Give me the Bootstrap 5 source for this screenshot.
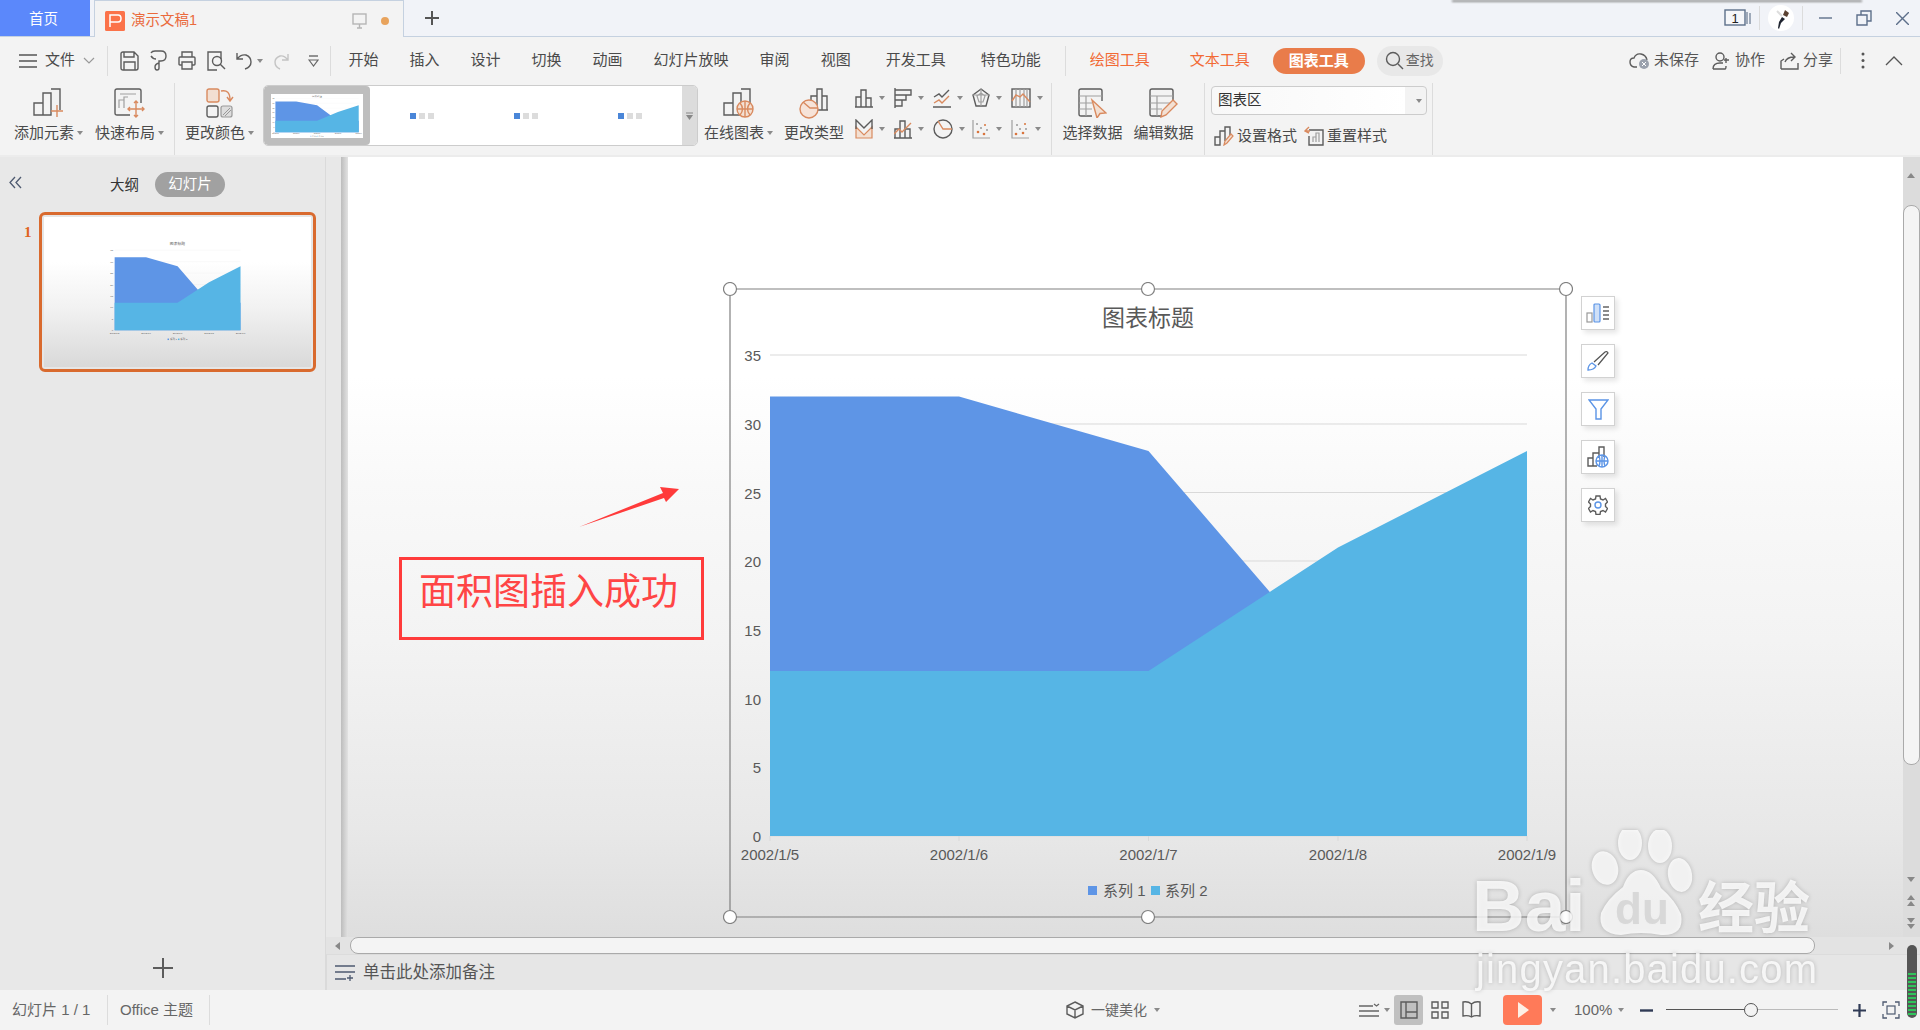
<!DOCTYPE html>
<html lang="zh-CN">
<head>
<meta charset="UTF-8">
<title>演示文稿1</title>
<link href="https://cdn.jsdelivr.net/npm/bootstrap@5.3.3/dist/css/bootstrap.min.css" rel="stylesheet">
<style>
body { font-family: "Liberation Sans", "Noto Sans CJK SC", sans-serif; font-size: 15px; color: #4a4a4a; background: #f3f3f3; overflow: hidden; }
svg { display: block; flex: none; }
.app { height: 1030px; width: 1920px; position: relative; }
.i { fill: none; stroke: #5c5c5c; stroke-width: 1.4; }
.o { fill: none; stroke: #d98a5f; stroke-width: 1.4; }
.g { fill: none; stroke: #a0a0a0; stroke-width: 1.2; }
.b { fill: none; stroke: #5b94e6; stroke-width: 1.4; }
.caret { display: inline-block; flex: none; width: 0; height: 0; border-left: 3px solid transparent; border-right: 3px solid transparent; border-top: 4px solid #8a8a8a; }
.vsep { flex: none; width: 1px; background: #dcdcdc; }

/* title bar */
.titlebar { height: 37px; background: #f1f3f8; border-bottom: 1px solid #c5d1e0; position: relative; }
.tab-home { width: 90px; height: 36px; background: #5b88fb; color: #fff; font-size: 14.5px; padding: 3px 3px 0 0; }
.tab-doc { margin-left: 4px; width: 310px; height: 37px; background: #f3f3f3; border: 1px solid #c5d1e0; border-bottom: 0; color: #ea6a3c; font-size: 14.5px; padding: 3px 0 0 10px; }
.tab-doc .name { margin-left: 6px; width: 221px; }
.tab-doc .dot { width: 8px; height: 8px; border-radius: 50%; background: #e8a35c; margin-left: 14px; }
.tab-add { margin-left: 20px; }
.top-shadow { position: absolute; left: 1452px; top: 0; width: 410px; height: 2px; background: #8d8d8d; filter: blur(1px); }
.win-ctl { margin-left: auto; padding-right: 11px; }
.win-ctl .vsep { height: 24px; }
.win-no { font-size: 13px; fill: #222; }

/* menu row */
.menubar { height: 43px; padding: 4px 0 0 19px; }
.menubar .vsep { height: 30px; }
.qa { gap: 10.5px; margin: 0 11px 0 12px; }
.qa .caret { margin-left: -10px; }
.menu { gap: 31px; margin-left: 18px; }
.menu .nav-link { padding: 0; color: #4a4a4a; font-size: 15px; }
.menu .more { margin-left: 4px; }
.tools { margin-left: 24px; }
.tools .tool { color: #f26a35; font-size: 15px; width: 61px; }
.tools .tool + .tool { margin-left: 39px; }
.tools .badge { margin-left: 22px; width: 92px; height: 26px; background: #e97c4a; font-size: 15px; font-weight: 700; padding: 0; line-height: 26px; border-radius: 13px; }
.find { margin-left: 12px; width: 66px; height: 30px; background: #e8e8e8; border-radius: 15px; padding-left: 8px; font-size: 14px; color: #666; gap: 2px; }
.saveinfo { margin-left: auto; padding-right: 17px; font-size: 15px; color: #555; }
.saveinfo .vsep { height: 26px; margin: 0 20px 0 7px; }
.saveinfo .gp { margin-left: 13px; }
.saveinfo .gp2 { margin-left: 15px; }
.saveinfo .up { margin-left: 20px; }

/* ribbon */
.ribbon { height: 77px; padding-left: 8px; border-bottom: 2px solid #ececec; }
.ribbon > .vsep { height: 72px; margin-top: 3px; }
.rb { flex: none; width: 81px; padding-top: 8px; }
.rb .ic { height: 35px; }
.rb .lb { font-size: 15px; line-height: 20px; white-space: nowrap; gap: 3px; }
.rb-type { width: 70px; }
.rb-edit { width: 61px; }
.gallery { flex: none; width: 435px; height: 61px; margin: 5px 0 0 3px; background: #fff; border: 1px solid #ccc; border-radius: 5px; overflow: hidden; }
.gallery .sel { width: 106px; background: #bebebe; padding: 0 7px; border-radius: 4px; }
.gallery .item { width: 106px; gap: 3px; }
.gallery .item i { display: block; width: 6px; height: 6px; background: #dcdcdc; }
.gallery .item i:first-child { background: #4a86d8; }
.gallery .more { margin-left: auto; width: 15px; background: #dcdcdc; }
.charts { flex: none; width: 195px; margin: 0 5px 0 2px; padding-top: 8px; row-gap: 11px; }
.charts .c { width: 39px; height: 20px; padding-left: 4px; gap: 6px; }
.panel { flex: none; width: 216px; margin: 6px 5px 0 6px; }
.combo { height: 29px; border: 1px solid #ccc; border-radius: 4px; padding: 0 4px 0 6px; background: linear-gradient(90deg, #f8f8f8, #fff 90%, #f3f3f3 90%); font-size: 14.5px; color: #333; }
.panel .fmt { margin-top: 10px; padding-left: 3px; font-size: 15px; gap: 3px; }
.rb-sep { margin-left: 10px; }

/* left panel */
.side { width: 326px; background: #e8e8e8; border-right: 1px solid #dadada; position: relative; }
.side-tabs { height: 55px; padding: 15px 0 0 9px; }
.side-tabs .t-outline { margin-left: 88px; font-size: 14.5px; color: #333; line-height: 27px; }
.side-tabs .badge { margin-left: 16px; width: 70px; height: 25px; background: #a1a1a1; font-size: 14.5px; font-weight: 400; line-height: 25px; padding: 0; border-radius: 13px; }
.side-row { padding-left: 24px; }
.side-no { width: 15px; color: #e0651f; font-weight: 700; font-family: "Liberation Serif", serif; font-size: 15px; padding-top: 9px; }
.thumb { width: 277px; height: 160px; border: 3px solid #d96a2e; border-radius: 6px; padding: 2px; background: #e6e6e6; }
.thumb .page { height: 100%; padding-top: 22px; background: linear-gradient(#fff, #fff 30%, #f2f2f2 60%, #d9d9d9 100%); }
.side-add { margin-top: auto; height: 40px; margin-bottom: 2px; }

/* stage */
.gutter { width: 22px; background: linear-gradient(90deg, #e8e8e8 68%, #bfbfbf 70%, #e2e2e2); }
.stage { position: relative; overflow: hidden; background: linear-gradient(#fff, #fff 28%, #f9f9f9 42%, #f3f3f3 62%, #e8e8e8 86%, #dedede); }
.chart-box { position: absolute; left: 375px; top: 125px; }
.note-box { position: absolute; left: 51px; top: 400px; width: 305px; height: 83px; border: 3px solid #ff3b3b; color: #ff4545; font-size: 37px; line-height: 1; padding: 14px 0 0 17px; white-space: nowrap; }
.arrow { position: absolute; left: 225px; top: 325px; }
.float-tools { position: absolute; left: 1233px; top: 139px; gap: 14px; }
.float-tools div { width: 34px; height: 34px; background: #fff; border: 1px solid #d2d2d2; box-shadow: 3px 3px 5px rgba(0,0,0,.1); }
.vscroll { width: 17px; background: #dcdcdc; position: relative; }
.vscroll .thumbv { position: absolute; left: 0; right: 0; top: 48px; height: 560px; background: #f4f4f4; border: 1px solid #aaa; border-radius: 8px; }
.arr-u, .arr-d { position: absolute; left: 4px; width: 0; height: 0; border-left: 4px solid transparent; border-right: 4px solid transparent; }
.arr-u { border-bottom: 5px solid #888; }
.arr-d { border-top: 5px solid #888; }
.a1 { top: 16px; } .a2 { top: 720px; } .a3 { top: 738px; } .a4 { top: 744px; } .a5 { top: 761px; } .a6 { top: 767px; }
.hscroll { height: 17px; background: #e3e3e3; padding: 0 26px 0 9px; }
.hscroll .track { width: 1465px; height: 17px; margin: 0 auto 0 10px; background: #f4f4f4; border: 1px solid #aaa; border-radius: 8px; }
.arr-l, .arr-r { width: 0; height: 0; border-top: 4px solid transparent; border-bottom: 4px solid transparent; }
.arr-l { border-right: 5px solid #888; }
.arr-r { border-left: 5px solid #888; }
.notes { height: 36px; background: #e6e6e6; padding-left: 8px; font-size: 16.5px; color: #555; gap: 8px; border-top: 1px solid #dcdcdc; border-left: 1px solid #dadada; }

/* status bar */
.statusbar { height: 40px; background: #f3f3f3; font-size: 15px; color: #666; }
.statusbar .vsep { height: 30px; }
.statusbar .pages { width: 107px; padding-left: 12px; }
.statusbar .theme { width: 101px; padding-left: 12px; }
.beautify { margin-left: 856px; width: 293px; gap: 7px; font-size: 14px; }
.viewbtn { width: 29px; height: 30px; background: #c0c0c0; border-radius: 3px; margin-left: 4px; }
.bookview { margin-left: 13px; }
.playbtn { width: 39px; height: 30px; background: #ff7a59; border-radius: 4px; margin-left: 22px; }
.zoom-pct { margin-left: 18px; width: 44px; }
.slider-w { width: 172px; height: 14px; margin: 0 15px 0 13px; position: relative; }
.slider-w .line { position: absolute; top: 6px; left: 0; right: 0; height: 1px; background: #bbb; }
.slider-w .line-on { position: absolute; top: 6px; left: 0; width: 85px; height: 1px; background: #555; }
.slider-w .knob { position: absolute; top: 0; left: 78px; width: 14px; height: 14px; border: 1.5px solid #555; border-radius: 50%; background: #f3f3f3; }
.meter { position: absolute; left: 1907px; top: 945px; width: 10px; height: 73px; background: #555; border-radius: 5px; overflow: hidden; }
.meter div { position: absolute; left: 1px; right: 1px; top: 28px; bottom: 3px; background: repeating-linear-gradient(#2fc45a 0 2px, #555 2px 4px); }
.watermark { position: absolute; left: 1470px; top: 830px; pointer-events: none; filter: drop-shadow(0 0 2px rgba(0,0,0,.25)); }
.watermark text { font-family: "Liberation Sans", "Noto Sans CJK SC", sans-serif; }
</style>
</head>
<body>
<!-- shared icon and chart definitions -->
<svg class="d-none">
  <defs>
    <symbol id="bars" viewBox="0 0 28 28"><path class="i" d="M1 15h9v12H1zM10 5h8v22h-8zM18 1h9v21"/></symbol>
    <g id="chart">
      <path d="M770 355H1527M770 424H1527M770 492.500H1527M770 561H1527M770 630H1527M770 699H1527M770 767.500H1527M770 836H1527" stroke="#d9d9d9" stroke-width="1" fill="none"/>
      <path d="M770 836V841M959 836V841M1148.500 836V841M1338 836V841M1527 836V841" stroke="#d9d9d9"/>
      <path d="M770 396.500H959L1148.500 451L1338 671H1527V836H770Z" fill="#5e95e6"/>
      <path d="M770 671H1148.500L1338 547.500L1527 451V836H770Z" fill="#56b5e5"/>
      <g font-family="'Liberation Sans','Noto Sans CJK SC',sans-serif" font-size="15" fill="#595959">
        <text x="1148" y="326" font-size="23" text-anchor="middle">图表标题</text>
        <g text-anchor="end">
          <text x="761" y="361">35</text><text x="761" y="430">30</text><text x="761" y="499">25</text><text x="761" y="567">20</text><text x="761" y="636">15</text><text x="761" y="705">10</text><text x="761" y="773">5</text><text x="761" y="842">0</text>
        </g>
        <g text-anchor="middle">
          <text x="770" y="860">2002/1/5</text><text x="959" y="860">2002/1/6</text><text x="1148.500" y="860">2002/1/7</text><text x="1338" y="860">2002/1/8</text><text x="1527" y="860">2002/1/9</text>
        </g>
        <rect x="1088" y="886" width="9" height="9" fill="#5e95e6"/><text x="1103" y="896">系列 1</text>
        <rect x="1151" y="886" width="9" height="9" fill="#56b5e5"/><text x="1165" y="896">系列 2</text>
      </g>
    </g>
  </defs>
</svg>

<div class="app d-flex flex-column">
  <!-- title bar -->
  <div class="titlebar d-flex">
    <div class="tab-home d-flex align-items-center justify-content-center">首页</div>
    <div class="tab-doc d-flex align-items-center">
      <svg width="20" height="20" viewBox="0 0 20 20"><rect width="20" height="20" rx="1.500" fill="#fb7249"/><path d="M5 16V4h8q3 0 3 3.500T13 11H5" fill="none" stroke="#fff" stroke-width="1.500"/></svg>
      <span class="name">演示文稿1</span>
      <svg width="15" height="16" viewBox="0 0 15 16"><rect x="1" y="1" width="13" height="10" fill="#f3f3f3" stroke="#b5b5b5" stroke-width="1.400"/><path d="M7.500 11v4M5 15h5" stroke="#b5b5b5" stroke-width="1.400"/></svg>
      <span class="dot"></span>
    </div>
    <svg class="tab-add align-self-center" width="16" height="16" viewBox="0 0 16 16"><path d="M8 1v14M1 8h14" stroke="#555" stroke-width="2"/></svg>
    <div class="top-shadow"></div>
    <div class="win-ctl d-flex align-items-center">
      <svg width="27" height="18" viewBox="0 0 27 18"><rect x="1" y="1" width="20" height="15" fill="#f6f7fa" stroke="#5d6f8a" stroke-width="1.400"/><text class="win-no" x="11" y="13.500" text-anchor="middle">1</text><path d="M23 3v12M26 4v11" stroke="#7d8ba0" stroke-width="1.400"/></svg>
      <span class="vsep ms-2"></span>
      <svg class="mx-2" width="26" height="26" viewBox="0 0 26 26"><circle cx="13" cy="13" r="13" fill="#fff"/><path d="M17 5l4 3-2 4-4-2z" fill="#5a4132"/><path d="M14 12l3 2-4 4-2 6-1-1 1-6z" fill="#1f2430"/><path d="M9 6l5 5" stroke="#ddd" stroke-width="2"/></svg>
      <span class="vsep me-3"></span>
      <svg width="13" height="2" viewBox="0 0 13 2"><path d="M0 1h13" stroke="#5d6f8a" stroke-width="1.400"/></svg>
      <svg class="ms-4" width="16" height="16" viewBox="0 0 16 16"><path d="M1 5h10v10H1zM5 5V1h10v10h-4" fill="none" stroke="#5d6f8a" stroke-width="1.400"/></svg>
      <svg class="ms-4" width="13" height="13" viewBox="0 0 13 13"><path d="M0 0l13 13M13 0L0 13" stroke="#5d6f8a" stroke-width="1.400"/></svg>
    </div>
  </div>

  <!-- menu row -->
  <div class="menubar d-flex align-items-center">
    <svg width="18" height="14" viewBox="0 0 18 14"><path d="M0 1h18M0 7h18M0 13h18" stroke="#555" stroke-width="1.400"/></svg>
    <span class="ms-2">文件</span>
    <svg class="mx-2" width="12" height="7" viewBox="0 0 12 7"><path d="M1 1l5 5 5-5" fill="none" stroke="#999" stroke-width="1.200"/></svg>
    <span class="vsep ms-1"></span>
    <div class="qa d-flex align-items-center">
      <svg width="19" height="20" viewBox="0 0 19 20"><path class="i" d="M1 3q0-2 2-2h11l4 4v12q0 2-2 2H3q-2 0-2-2zM4 1v5h10V1M4 19v-8h11v8"/></svg>
      <svg width="18" height="21" viewBox="0 0 18 21"><path class="i" d="M1 3q1-2 4-2h6q5 0 5 5t-5 5H9v7q0 2-2 2t-2-3 4-4M1 6q2 3 5 3"/></svg>
      <svg width="18" height="19" viewBox="0 0 18 19"><path class="i" d="M4 6V1h10v5M4 14H2q-1 0-1-1V7q0-1 1-1h14q1 0 1 1v6q0 1-1 1h-2M4 11h10v7H4z"/></svg>
      <svg width="19" height="20" viewBox="0 0 19 20"><path class="i" d="M14 8V1H1v18h9"/><circle class="i" cx="10" cy="10" r="4.500"/><path class="i" d="M13 13l5 5"/></svg>
      <svg width="20" height="19" viewBox="0 0 20 19"><path class="i" d="M1 2v6h6M1 8q4-5 9-4 5 2 5 7 0 5-6 7"/></svg>
      <span class="caret"></span>
      <svg width="16" height="18" viewBox="0 0 16 18"><path d="M15 2v6H9M15 8q-4-5-8-4-5 2-5 6 0 5 5 7" fill="none" stroke="#c4c4c4" stroke-width="1.400"/></svg>
      <svg class="ms-2" width="11" height="12" viewBox="0 0 11 12"><path d="M1 1h9" stroke="#666" stroke-width="1.400"/><path d="M1 5l4.500 6L10 5z" fill="none" stroke="#666" stroke-width="1.200"/></svg>
    </div>
    <span class="vsep"></span>
    <nav class="nav menu flex-nowrap">
      <a class="nav-link">开始</a><a class="nav-link">插入</a><a class="nav-link">设计</a><a class="nav-link">切换</a><a class="nav-link">动画</a><a class="nav-link">幻灯片放映</a><a class="nav-link">审阅</a><a class="nav-link">视图</a><a class="nav-link more">开发工具</a><a class="nav-link more">特色功能</a>
    </nav>
    <span class="vsep ms-4"></span>
    <div class="tools d-flex align-items-center">
      <span class="tool text-nowrap">绘图工具</span><span class="tool text-nowrap">文本工具</span>
      <span class="badge text-white">图表工具</span>
    </div>
    <div class="find d-flex align-items-center">
      <svg width="19" height="19" viewBox="0 0 19 19"><circle class="i" cx="8" cy="8" r="6.500"/><path class="i" d="M13 13l5 5"/></svg>
      <span class="text-nowrap">查找</span>
    </div>
    <div class="saveinfo d-flex align-items-center">
      <svg width="21" height="18" viewBox="0 0 21 18"><path class="i" d="M8 15H5q-4-1-4-5t4-4q2-5 7-4 5 1 6 6"/><circle cx="15" cy="12" r="5" fill="#9aa1ad"/><path d="M13 10l4 4M17 10l-4 4" stroke="#fff"/></svg>
      <span class="ms-1 text-nowrap">未保存</span>
      <svg class="gp" width="19" height="18" viewBox="0 0 19 18"><circle class="i" cx="8" cy="5" r="4"/><path class="i" d="M1 17q0-6 7-6h3M1 17h12q1 0 1-3M14 6v5M12 8h5"/></svg>
      <span class="ms-1 text-nowrap">协作</span>
      <svg class="gp2" width="19" height="18" viewBox="0 0 19 18"><path class="i" d="M1 17V9l3-2M18 11v6H1M5 10q2-5 9-5M11 1l4 4-4 4"/></svg>
      <span class="ms-1 text-nowrap">分享</span>
      <span class="vsep"></span>
      <svg width="4" height="17" viewBox="0 0 4 17"><circle cx="2" cy="2" r="1.500" fill="#555"/><circle cx="2" cy="8.500" r="1.500" fill="#555"/><circle cx="2" cy="15" r="1.500" fill="#555"/></svg>
      <svg class="up" width="18" height="10" viewBox="0 0 18 10"><path d="M1 9l8-8 8 8" fill="none" stroke="#555" stroke-width="1.300"/></svg>
    </div>
  </div>

  <!-- ribbon -->
  <div class="ribbon d-flex">
    <div class="rb d-flex flex-column align-items-center">
      <div class="ic"><svg width="32" height="30" viewBox="0 0 32 30"><use href="#bars" width="28" height="28"/><path class="o" d="M24 17v12M18 23h12"/></svg></div>
      <div class="lb d-flex align-items-center">添加元素<span class="caret"></span></div>
    </div>
    <div class="rb d-flex flex-column align-items-center">
      <div class="ic"><svg width="32" height="30" viewBox="0 0 32 30"><path class="i" d="M16 27H3q-2 0-2-2V3q0-2 2-2h22q2 0 2 2v12"/><path class="g" d="M6 6h16M5 20v-8h5v8M10 20V9h4"/><path class="o" d="M22 13v16M14 21h16M20 15l2-2 2 2M20 27l2 2 2-2M16 19l-2 2 2 2M28 19l2 2-2 2"/></svg></div>
      <div class="lb d-flex align-items-center">快速布局<span class="caret"></span></div>
    </div>
    <span class="vsep ms-1"></span>
    <div class="rb ms-1 d-flex flex-column align-items-center">
      <div class="ic"><svg width="28" height="30" viewBox="0 0 28 30"><rect x="1" y="1" width="12" height="13" rx="2" fill="#f2dfd2" stroke="#d98a5f" stroke-width="1.400"/><path class="o" d="M15 3q9-2 9 9M21 9l3 4 3-4"/><rect class="i" x="1" y="18" width="11" height="11" rx="2"/><rect x="15" y="18" width="11" height="11" rx="2" fill="#ddd" stroke="#999" stroke-width="1.200"/><path d="M17 27l7-7M19 28l6-6" stroke="#999"/></svg></div>
      <div class="lb d-flex align-items-center">更改颜色<span class="caret"></span></div>
    </div>
    <div class="gallery d-flex">
      <div class="sel d-flex align-items-center">
        <svg width="92" height="44" viewBox="730 289 836 628" preserveAspectRatio="none"><rect x="730" y="289" width="836" height="628" fill="#fff"/><use href="#chart"/></svg>
      </div>
      <div class="item d-flex align-items-center justify-content-center"><i></i><i></i><i></i></div>
      <div class="item d-flex align-items-center justify-content-center"><i></i><i></i><i></i></div>
      <div class="item d-flex align-items-center justify-content-center"><i></i><i></i><i></i></div>
      <div class="more d-flex align-items-center justify-content-center">
        <svg width="7" height="8" viewBox="0 0 7 8"><path d="M0 1h7" stroke="#888"/><path d="M0 3h7L3.500 8z" fill="#888"/></svg>
      </div>
    </div>
    <div class="rb d-flex flex-column align-items-center">
      <div class="ic"><svg width="32" height="30" viewBox="0 0 32 30"><use href="#bars" width="28" height="28"/><circle cx="22" cy="21" r="8" fill="#f3e0d3" stroke="#d98a5f" stroke-width="1.400"/><path class="o" d="M14 21h16M22 13v16M17 15q5 6 0 12M27 15q-5 6 0 12" stroke-width="1"/></svg></div>
      <div class="lb d-flex align-items-center">在线图表<span class="caret"></span></div>
    </div>
    <div class="rb rb-type d-flex flex-column align-items-center">
      <div class="ic"><svg width="30" height="31" viewBox="0 0 30 31"><path class="i" d="M12 20V8h6v14M18 22V1h5v21M23 22V8h5v14M12 22h17"/><circle cx="10" cy="21" r="9" fill="#f6e3d8" stroke="#d98a5f" stroke-width="1.400"/><path class="o" d="M4 14l7 6h8"/></svg></div>
      <div class="lb d-flex align-items-center">更改类型</div>
    </div>
    <div class="charts d-flex flex-wrap align-content-start">
      <div class="c d-flex align-items-center"><svg width="18" height="20" viewBox="0 0 18 20"><path class="i" d="M1 19V9h5v10M6 19V2h5v17M11 19v-9h5v9M0 19h18" stroke-width="1.200"/></svg><span class="caret"></span></div>
      <div class="c d-flex align-items-center"><svg width="18" height="20" viewBox="0 0 18 20"><path class="i" d="M1 0v20M1 2h16v5H1M1 7h11v5H1M1 12h7v6H1" stroke-width="1.200"/></svg><span class="caret"></span></div>
      <div class="c d-flex align-items-center"><svg width="18" height="20" viewBox="0 0 18 20"><path class="i" d="M1 9l5-3 3 3 7-7M0 19h18" stroke-width="1.200"/><path class="o" d="M1 15l5-3 3 3 7-7"/></svg><span class="caret"></span></div>
      <div class="c d-flex align-items-center"><svg width="18" height="20" viewBox="0 0 18 20"><path class="i" d="M9 1l8 6-3 11H4L1 7z" stroke-width="1.100"/><path class="g" d="M9 5l4 3-2 6H7L5 8zM9 1v17M1 7l16 0"/></svg><span class="caret"></span></div>
      <div class="c d-flex align-items-center"><svg width="20" height="20" viewBox="0 0 20 20"><rect class="i" x="1" y="1" width="18" height="18"/><path class="g" d="M5 1v18M9 1v18M13 1v18M16 1v18"/><path class="o" d="M1 13l4-6 4 2 3-3 7 8"/></svg><span class="caret"></span></div>
      <div class="c d-flex align-items-center"><svg width="18" height="20" viewBox="0 0 18 20"><path d="M1 8l8 8 8-8v11H1z" fill="#f3e0d3" stroke="#d98a5f" stroke-width="1.200"/><path class="i" d="M1 10V1l8 8 8-8v9" stroke-width="1.200"/></svg><span class="caret"></span></div>
      <div class="c d-flex align-items-center"><svg width="18" height="20" viewBox="0 0 18 20"><path class="i" d="M1 19v-9h5v9M6 19V2h5v17M11 19v-9h5v9M0 19h18" stroke-width="1.200"/><path class="o" d="M0 15l5-5 3 3 9-9"/></svg><span class="caret"></span></div>
      <div class="c d-flex align-items-center"><svg width="20" height="20" viewBox="0 0 20 20"><circle class="i" cx="10" cy="10" r="9"/><path class="o" d="M5 2l5 8h9"/></svg><span class="caret"></span></div>
      <div class="c d-flex align-items-center"><svg width="18" height="20" viewBox="0 0 18 20"><path class="g" d="M1 1v18h17"/><g fill="#d9743d"><circle cx="6" cy="13" r="1.300"/><circle cx="12" cy="15" r="1.300"/><circle cx="13" cy="6" r="1"/></g><g fill="#999"><circle cx="5" cy="5" r="1"/><circle cx="9" cy="9" r="1"/><circle cx="15" cy="11" r="1"/></g></svg><span class="caret"></span></div>
      <div class="c d-flex align-items-center"><svg width="18" height="20" viewBox="0 0 18 20"><path class="g" d="M1 1v18h17"/><g fill="#d9743d"><circle cx="5" cy="15" r="1.300"/><circle cx="12" cy="14" r="1.300"/><circle cx="14" cy="5" r="1"/></g><g fill="#999"><circle cx="6" cy="6" r="1"/><circle cx="9" cy="10" r="1"/><circle cx="15" cy="10" r="1"/></g></svg><span class="caret"></span></div>
    </div>
    <span class="vsep"></span>
    <div class="rb d-flex flex-column align-items-center">
      <div class="ic"><svg width="29" height="30" viewBox="0 0 29 30"><path class="i" d="M14 28H3q-2 0-2-2V3q0-2 2-2h19q2 0 2 2v10"/><path class="g" d="M1 8h23M1 15h13M1 21h13M8 8v20"/><path d="M14 12l14 13-6 .5-3 4.500z" fill="#f3e0d3" stroke="#d98a5f" stroke-width="1.400"/></svg></div>
      <div class="lb d-flex align-items-center">选择数据</div>
    </div>
    <div class="rb rb-edit d-flex flex-column align-items-center">
      <div class="ic"><svg width="29" height="30" viewBox="0 0 29 30"><path class="i" d="M12 28H3q-2 0-2-2V3q0-2 2-2h19q2 0 2 2v13"/><path class="g" d="M1 8h23M1 15h23M1 21h12M8 8v20"/><path d="M12 29l1-6L24 12l4 4-11 11z" fill="#f3e0d3" stroke="#d98a5f" stroke-width="1.400"/></svg></div>
      <div class="lb d-flex align-items-center">编辑数据</div>
    </div>
    <span class="vsep rb-sep"></span>
    <div class="panel">
      <div class="combo d-flex align-items-center justify-content-between">图表区<span class="caret"></span></div>
      <div class="fmt d-flex align-items-center">
        <svg width="20" height="20" viewBox="0 0 20 20"><path class="i" d="M1 11h5v8H1zM6 19V5h5v10M11 8V1h5v8" stroke-width="1.200"/><path d="M10 19l1-4 6-7 2 2-6 7z" fill="#f3e0d3" stroke="#d98a5f" stroke-width="1.200"/></svg>
        <span class="text-nowrap">设置格式</span>
        <svg class="ms-1" width="20" height="20" viewBox="0 0 20 20"><path class="i" d="M5 4h14v15H5V10" stroke-width="1.200"/><path class="g" d="M9 16v-5h3v5M12 16V7h3v9"/><path class="o" d="M5 1L1 5l4 2M1 5h5"/></svg>
        <span class="text-nowrap">重置样式</span>
      </div>
    </div>
    <span class="vsep"></span>
  </div>

  <!-- workspace -->
  <div class="d-flex flex-grow-1 overflow-hidden">
    <div class="side d-flex flex-column">
      <div class="side-tabs d-flex">
        <svg class="mt-1" width="13" height="13" viewBox="0 0 13 13"><path d="M6 1L1 6.500 6 12M12 1L7 6.500 12 12" fill="none" stroke="#4e5a70" stroke-width="1.300"/></svg>
        <span class="t-outline">大纲</span>
        <span class="badge">幻灯片</span>
      </div>
      <div class="side-row d-flex">
        <span class="side-no">1</span>
        <div class="thumb">
          <div class="page d-flex justify-content-center">
            <svg width="139" height="105" viewBox="730 289 836 628"><use href="#chart"/></svg>
          </div>
        </div>
      </div>
      <div class="side-add d-flex justify-content-center align-items-center">
        <svg width="20" height="20" viewBox="0 0 20 20"><path d="M10 0v20M0 10h20" stroke="#5c5c5c" stroke-width="2"/></svg>
      </div>
    </div>

    <div class="d-flex flex-column flex-grow-1">
      <div class="d-flex flex-grow-1">
        <div class="gutter"></div>
        <div class="stage flex-grow-1">
          <svg class="arrow" width="110" height="50" viewBox="0 0 110 50"><path d="M6 45L90 11 87 5 106 7 93 20 91 16z" fill="#ff3b3b"/></svg>
          <div class="note-box">面积图插入成功</div>
          <svg class="chart-box" width="850" height="642" viewBox="723 282 850 642">
            <use href="#chart"/>
            <path d="M730 289H1566V917H730Z" fill="none" stroke="#808080" stroke-width="1.200"/>
            <g fill="#fff" stroke="#808080" stroke-width="1.200">
              <circle cx="730" cy="289" r="6.500"/><circle cx="1148" cy="289" r="6.500"/><circle cx="1566" cy="289" r="6.500"/><circle cx="730" cy="917" r="6.500"/><circle cx="1148" cy="917" r="6.500"/><circle cx="1566" cy="917" r="6.500"/>
            </g>
          </svg>
          <div class="float-tools d-flex flex-column">
            <div class="d-flex align-items-center justify-content-center"><svg width="24" height="20" viewBox="0 0 24 20"><rect x="1" y="10" width="5" height="9" fill="none" stroke="#999" stroke-width="1.200"/><rect x="8" y="1" width="6" height="18" rx="1" fill="#cfe0f8" stroke="#5b94e6" stroke-width="1.200"/><path d="M17 4h6M17 8h6M17 12h6M17 16h6" stroke="#666" stroke-width="1.400"/></svg></div>
            <div class="d-flex align-items-center justify-content-center"><svg width="22" height="20" viewBox="0 0 22 20"><path d="M1 19q0-5 4-7l4 3q-2 4-8 4z" fill="none" stroke="#5b94e6" stroke-width="1.300"/><path d="M7 11L18 1q2-1 3 1L11 14" fill="none" stroke="#555" stroke-width="1.300"/></svg></div>
            <div class="d-flex align-items-center justify-content-center"><svg width="21" height="21" viewBox="0 0 21 21"><path class="b" d="M1 1h19l-7 9v10h-5V10z"/></svg></div>
            <div class="d-flex align-items-center justify-content-center"><svg width="22" height="22" viewBox="0 0 22 22"><path class="i" d="M1 12h5v8H1zM6 20V7h6v5M12 7V1h5v10M1 20h9"/><circle class="b" cx="15" cy="15" r="6"/><path class="b" d="M9 15h12M15 9v12M12 10q2 5 0 10M18 10q-2 5 0 10" stroke-width="1"/></svg></div>
            <div class="d-flex align-items-center justify-content-center"><svg width="20" height="20" viewBox="0 0 20 20"><path class="i" d="M8 1h4l.5 3 2.500 1 2.500-1.500 2 3.500-2 2v2.500l2 2-2 3.500-2.500-1.500-2.500 1-.5 3H8l-.5-3-2.500-1-2.500 1.500-2-3.500 2-2V9l-2-2 2-3.500L5 5l2.500-1z" stroke-width="1.100"/><circle class="b" cx="10" cy="10" r="3"/></svg></div>
          </div>
        </div>
        <div class="vscroll">
          <span class="arr-u a1"></span>
          <div class="thumbv"></div>
          <span class="arr-d a2"></span>
          <span class="arr-u a3"></span><span class="arr-u a4"></span>
          <span class="arr-d a5"></span><span class="arr-d a6"></span>
        </div>
      </div>
      <div class="hscroll d-flex align-items-center">
        <span class="arr-l"></span>
        <div class="track"></div>
        <span class="arr-r"></span>
      </div>
      <div class="notes d-flex align-items-center">
        <svg width="20" height="16" viewBox="0 0 20 16"><path d="M0 1h20M0 7h20M0 14h11M15 10v6M12 13h6" stroke="#4e5a70" stroke-width="1.300"/></svg>
        <span class="text-nowrap">单击此处添加备注</span>
      </div>
    </div>
  </div>

  <!-- status bar -->
  <div class="statusbar d-flex align-items-center">
    <span class="pages text-nowrap">幻灯片 1 / 1</span><span class="vsep"></span>
    <span class="theme text-nowrap">Office 主题</span><span class="vsep"></span>
    <div class="beautify d-flex align-items-center">
      <svg width="18" height="18" viewBox="0 0 18 18"><path class="i" d="M9 1l8 4v8l-8 4-8-4V5zM1 5l8 4 8-4M9 9v8"/></svg>
      <span class="text-nowrap">一键美化</span><span class="caret"></span>
    </div>
    <svg width="21" height="14" viewBox="0 0 21 14"><path d="M0 3h14M0 8h20M0 13h20M15 1l2.500 2L20 1" fill="none" stroke="#666" stroke-width="1.300"/></svg>
    <span class="caret ms-1"></span>
    <div class="viewbtn d-flex align-items-center justify-content-center"><svg width="18" height="18" viewBox="0 0 18 18"><path class="i" d="M1 1h16v16H1zM6 1v16M6 11h11"/></svg></div>
    <svg class="ms-2" width="18" height="18" viewBox="0 0 18 18"><path class="i" d="M1 1h6v6H1zM11 1h6v6h-6zM1 11h6v6H1zM11 11h6v6h-6z"/></svg>
    <svg class="bookview" width="19" height="18" viewBox="0 0 19 18"><path class="i" d="M9.500 3Q6 0 1 1v14q5-1 8.500 1 3.500-2 8.500-1V1q-5-1-8.500 2zM9.500 3v13"/></svg>
    <div class="playbtn d-flex align-items-center justify-content-center"><svg width="12" height="16" viewBox="0 0 12 16"><path d="M1 0l11 8-11 8z" fill="#fdf0e6"/></svg></div>
    <span class="caret ms-2"></span>
    <span class="zoom-pct text-nowrap">100%</span>
    <span class="caret"></span>
    <svg class="ms-3" width="13" height="3" viewBox="0 0 13 3"><path d="M0 1.500h13" stroke="#2f3a55" stroke-width="2.400"/></svg>
    <div class="slider-w"><div class="line"></div><div class="line-on"></div><div class="knob"></div></div>
    <svg width="13" height="13" viewBox="0 0 13 13"><path d="M0 6.500h13M6.500 0v13" stroke="#2f3a55" stroke-width="2.200"/></svg>
    <svg class="ms-3" width="18" height="18" viewBox="0 0 18 18"><path d="M1 5V1h4M13 1h4v4M17 13v4h-4M5 17H1v-4" fill="none" stroke="#4e5a70" stroke-width="1.300"/><rect x="5" y="5" width="8" height="8" fill="none" stroke="#4e5a70" stroke-width="1.200"/></svg>
  </div>

  <div class="meter"><div></div></div>

  <!-- watermark over the corner -->
  <svg class="watermark" width="360" height="165" viewBox="1470 830 360 165">
    <g fill="#fff" fill-opacity=".8">
      <ellipse cx="1630" cy="843" rx="12" ry="17"/><ellipse cx="1660" cy="846" rx="12" ry="17"/>
      <ellipse cx="1605" cy="868" rx="13" ry="17" transform="rotate(-15 1605 868)"/><ellipse cx="1680" cy="875" rx="12" ry="17" transform="rotate(-10 1680 875)"/>
      <path d="M1641 870q12 0 20 18 14 12 20 26 4 22-20 21-20-4-40 0-24-1-20-22 6-14 22-26 6-17 18-17z"/>
      <text x="1472" y="930.500" font-size="73" font-weight="700">Bai</text>
      <text x="1698" y="928" font-size="56" font-weight="700">经验</text>
      <text x="1476" y="982.500" font-size="40" textLength="341">jingyan.baidu.com</text>
    </g>
    <text x="1615" y="924" font-family="Liberation Sans" font-size="44" font-weight="700" fill="#d8d8d8" textLength="54">du</text>
  </svg>
</div>
<script src="https://cdn.jsdelivr.net/npm/bootstrap@5.3.3/dist/js/bootstrap.bundle.min.js"></script>
</body>
</html>
